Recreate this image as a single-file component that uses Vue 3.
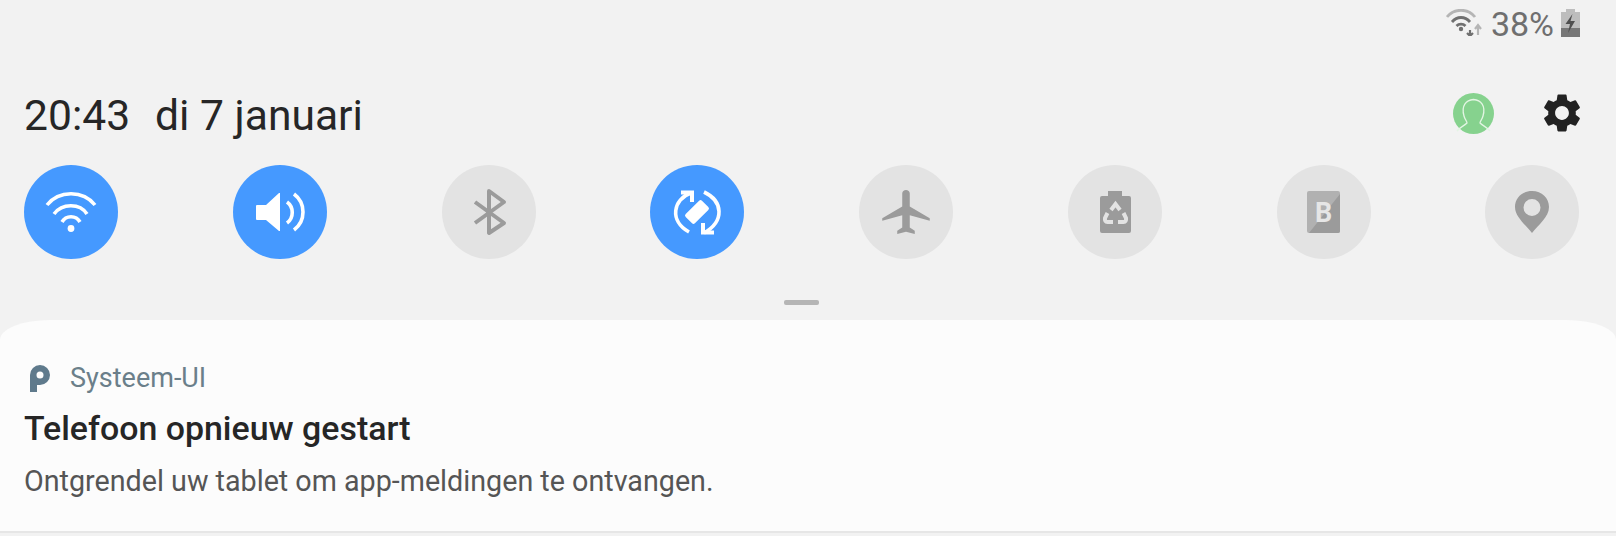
<template>
  <div class="panel">
    <div class="status">
      <svg class="status-wifi" width="36" height="27" viewBox="0 0 36 27">
        <g fill="none" stroke-linecap="butt">
          <path d="M1 8 C8 -1 22 -1 29 8" stroke="#b5b5b5" stroke-width="2.8" />
          <path d="M6 13 C11 7 19 7 24 13" stroke="#707070" stroke-width="2.8" />
          <path d="M10.500 17 C13 14.500 17 14.500 19.500 17" stroke="#707070" stroke-width="2.800" />
        </g>
        <circle cx="15" cy="20" r="2.200" fill="#707070" />
        <path d="M24 21 V27 M21 24 L24 27 L27 24" fill="none" stroke="#707070" stroke-width="2.200" />
        <path d="M32 26 V17 M29 20 L32 16 L35 20" fill="none" stroke="#b5b5b5" stroke-width="2.200" />
      </svg>
      <span class="percent">38%</span>
      <svg class="status-battery" width="19" height="28" viewBox="0 0 19 28">
        <path d="M5 0 H14 V3 H19 V19 H0 V3 H5 Z" fill="#bdbdbd" />
        <rect y="19" width="19" height="9" fill="#777" />
        <path d="M11.500 5 L4.500 15 H9 L7 24 L14 12 H9.500 Z" fill="#4f4f4f" />
      </svg>
    </div>

    <div class="header">
      <div class="clock">
        <span>20:43</span>
        <span>di 7 januari</span>
      </div>
      <div class="header-actions">
        <svg width="41" height="41" viewBox="0 0 41 41">
          <circle cx="20.500" cy="20.500" r="20.500" fill="#86d28e" />
          <path
            d="M4 38 C7 34 11 33 14 30 C14 28 12 27 11 23 C8 13 13 7 20.500 6.500 C28 7 33 13 30 23 C29 27 27 28 27 30 C30 33 34 34 37 38"
            fill="none"
            stroke="#e3f5e3"
            stroke-width="1.300"
          />
        </svg>
        <svg class="gear" width="46" height="46" viewBox="0 0 24 24">
          <path
            fill="#222"
            d="M19.140 12.940c.04-.3.060-.61.060-.94 0-.32-.02-.64-.07-.94l2.030-1.580a.49.49 0 0 0 .12-.61l-1.920-3.320a.488.488 0 0 0-.59-.22l-2.390.96c-.5-.38-1.030-.7-1.620-.94l-.36-2.540a.484.484 0 0 0-.48-.41h-3.840c-.24 0-.43.17-.47.41l-.36 2.540c-.59.24-1.130.57-1.620.94l-2.390-.96c-.22-.08-.47 0-.59.22L2.740 8.870c-.12.210-.08.470.12.610l2.030 1.580c-.05.3-.09.630-.09.940s.02.640.07.940l-2.030 1.580a.49.49 0 0 0-.12.610l1.920 3.320c.12.220.37.290.59.220l2.390-.96c.5.380 1.030.7 1.620.94l.36 2.540c.05.240.24.410.48.410h3.840c.24 0 .44-.17.470-.41l.36-2.540c.59-.24 1.130-.56 1.620-.94l2.390.96c.22.080.47 0 .59-.22l1.920-3.320c.12-.22.070-.47-.12-.61l-2.010-1.580zM12 15.600c-1.980 0-3.600-1.620-3.600-3.600s1.620-3.600 3.600-3.600 3.600 1.620 3.600 3.600-1.620 3.600-3.600 3.600z"
          />
        </svg>
      </div>
    </div>

    <div class="toggles">
      <div class="toggle on">
        <svg viewBox="0 0 94 94">
          <g fill="none" stroke="#fff" stroke-width="3.600">
            <path d="M23 40 C35 25 59 25 71 40" />
            <path d="M30 49 C38 38 56 38 63 49" />
            <path d="M38 57 C42 50 52 50 56 57" />
          </g>
          <circle cx="47" cy="63.500" r="3.400" fill="#fff" />
        </svg>
      </div>
      <div class="toggle on">
        <svg viewBox="0 0 94 94">
          <path d="M23 41 Q23 40 24 40 H33 L46 28 H47 V66 H46 L33 55 H24 Q23 55 23 54 Z" fill="#fff" />
          <g fill="none" stroke="#fff" stroke-width="3.600">
            <path d="M54 37 C61 42 61 53 54 58" />
            <path d="M61 29 C73 38 73 56 61 65" />
          </g>
        </svg>
      </div>
      <div class="toggle">
        <svg viewBox="0 0 94 94">
          <path
            d="M33 37 L62 58 L47 68 V26 L62 37 L33 58"
            fill="none"
            stroke="#9b9b9b"
            stroke-width="4"
            stroke-linejoin="round"
          />
        </svg>
      </div>
      <div class="toggle on">
        <svg viewBox="0 0 94 94">
          <rect x="35.500" y="40.500" width="23" height="13" rx="2" transform="rotate(-45 47 47)" fill="#fff" />
          <g fill="none" stroke="#fff" stroke-width="3.600">
            <path d="M41 28 C23 34 19 56 39 67" />
            <path d="M54 27 C73 36 75 56 54 68" />
            <path d="M31 27.500 H42 V37" stroke-width="4" />
            <path d="M64 67.500 H53 V58" stroke-width="4" />
          </g>
        </svg>
      </div>
      <div class="toggle">
        <svg viewBox="0 0 94 94">
          <path
            transform="translate(18.250 20.600) scale(2.500 2.200)"
            fill="#9b9b9b"
            d="M21 16v-1.200l-8-5.300V3.500c0-.83-.67-1.500-1.500-1.500S10 2.670 10 3.500v6l-8 5.300V16l8-2.500V19l-2 1.500V22l3.500-1 3.500 1v-1.500L13 19v-5.500z"
          />
        </svg>
      </div>
      <div class="toggle">
        <svg viewBox="0 0 94 94">
          <path
            d="M40 26 H54 V31 H61 Q63 31 63 33 V66 Q63 68 61 68 H34 Q32 68 32 66 V33 Q32 31 34 31 H40 Z"
            fill="#9b9b9b"
          />
          <g fill="none" stroke="#e3e3e3" stroke-width="4">
            <path d="M43 45 L47.500 39 L52 45" />
            <path d="M39.500 48 L37 53 Q36.500 57 39.500 57 H45" />
            <path d="M55.500 48 L58 53 Q58.500 57 55.500 57 H50" />
          </g>
        </svg>
      </div>
      <div class="toggle">
        <svg viewBox="0 0 94 94">
          <rect x="30" y="26" width="33" height="42" rx="2" fill="#b1b1b1" />
          <path d="M63 29 V66 Q63 68 61 68 H32 Z" fill="#9b9b9b" />
          <text x="46.500" y="56.500" text-anchor="middle" class="badge-letter">B</text>
        </svg>
      </div>
      <div class="toggle">
        <svg viewBox="0 0 94 94">
          <path
            fill="#9b9b9b"
            fill-rule="evenodd"
            d="M47 26 C37 26 30 33 30 42 C30 52 41 60 47 68 C53 60 64 52 64 42 C64 33 57 26 47 26 Z M47 34 A8.500 8.500 0 1 1 47 51 A8.500 8.500 0 1 1 47 34 Z"
          />
        </svg>
      </div>
    </div>

    <div class="handle"></div>

    <div class="card">
      <div class="card-app">
        <svg width="20" height="27" viewBox="0 0 20 27">
          <path
            fill="#5f7a8c"
            fill-rule="evenodd"
            d="M0 27 V10 A10 10 0 1 1 10 20 H7 V27 Z M10 6.500 A3.500 3.500 0 1 0 10 13.500 A3.500 3.500 0 1 0 10 6.500 Z"
          />
        </svg>
        <span>Systeem-UI</span>
      </div>
      <div class="card-title">Telefoon opnieuw gestart</div>
      <div class="card-text">Ontgrendel uw tablet om app-meldingen te ontvangen.</div>
    </div>
  </div>
</template>

<script setup>
</script>

<style>
html, body { background: #f2f2f2; }
</style>

<style scoped>
.panel {
  width: 1616px;
  height: 536px;
  overflow: hidden;
  background: #f2f2f2;
  font-family: Roboto, "Liberation Sans", sans-serif;
}

.status {
  height: 80px;
  box-sizing: border-box;
  padding: 9px 36px 0 0;
  display: flex;
  justify-content: flex-end;
  align-items: flex-start;
}
.percent {
  margin-left: 9px;
  font-size: 34px;
  line-height: 30px;
  color: #6f6f6f;
}
.status-battery { margin-left: 7px; }

.header {
  height: 66px;
  padding: 0 36px 0 24px;
  display: flex;
  align-items: center;
  justify-content: space-between;
}
.clock {
  display: flex;
  gap: 25px;
  padding-top: 3px;
  font-size: 42.6px;
  color: #262626;
}
.header-actions {
  display: flex;
  align-items: center;
  gap: 45px;
}
.gear { margin-right: -5px; }

.toggles {
  margin-top: 19px;
  padding: 0 36.500px 0 24px;
  display: flex;
  justify-content: space-between;
}
.toggle {
  width: 94px;
  height: 94px;
  border-radius: 50%;
  background: #e3e3e3;
}
.toggle.on { background: #4599ff; }
.toggle svg {
  display: block;
  width: 94px;
  height: 94px;
}
.badge-letter {
  font-family: Roboto, sans-serif;
  font-size: 27px;
  font-weight: 700;
  fill: #e6e6e6;
}

.handle {
  width: 35px;
  height: 5px;
  margin: 41px 0 15px 784px;
  border-radius: 2px;
  background: #b5b5b5;
}

.card {
  height: 213px;
  box-sizing: border-box;
  padding: 43px 24px 0;
  background: #fcfcfc;
  border-bottom: 2px solid #e6e6e6;
  border-radius: 50px 50px 0 0 / 20px 20px 0 0;
}
.card-app {
  display: flex;
  align-items: center;
  gap: 20px;
  padding-left: 6px;
  font-size: 27px;
  line-height: 30px;
  color: #6b7f8a;
}
.card-title {
  margin-top: 16px;
  font-size: 33.9px;
  line-height: 40px;
  font-weight: 500;
  color: #262626;
}
.card-text {
  margin-top: 15px;
  font-size: 28.7px;
  line-height: 34px;
  color: #555;
}
</style>
